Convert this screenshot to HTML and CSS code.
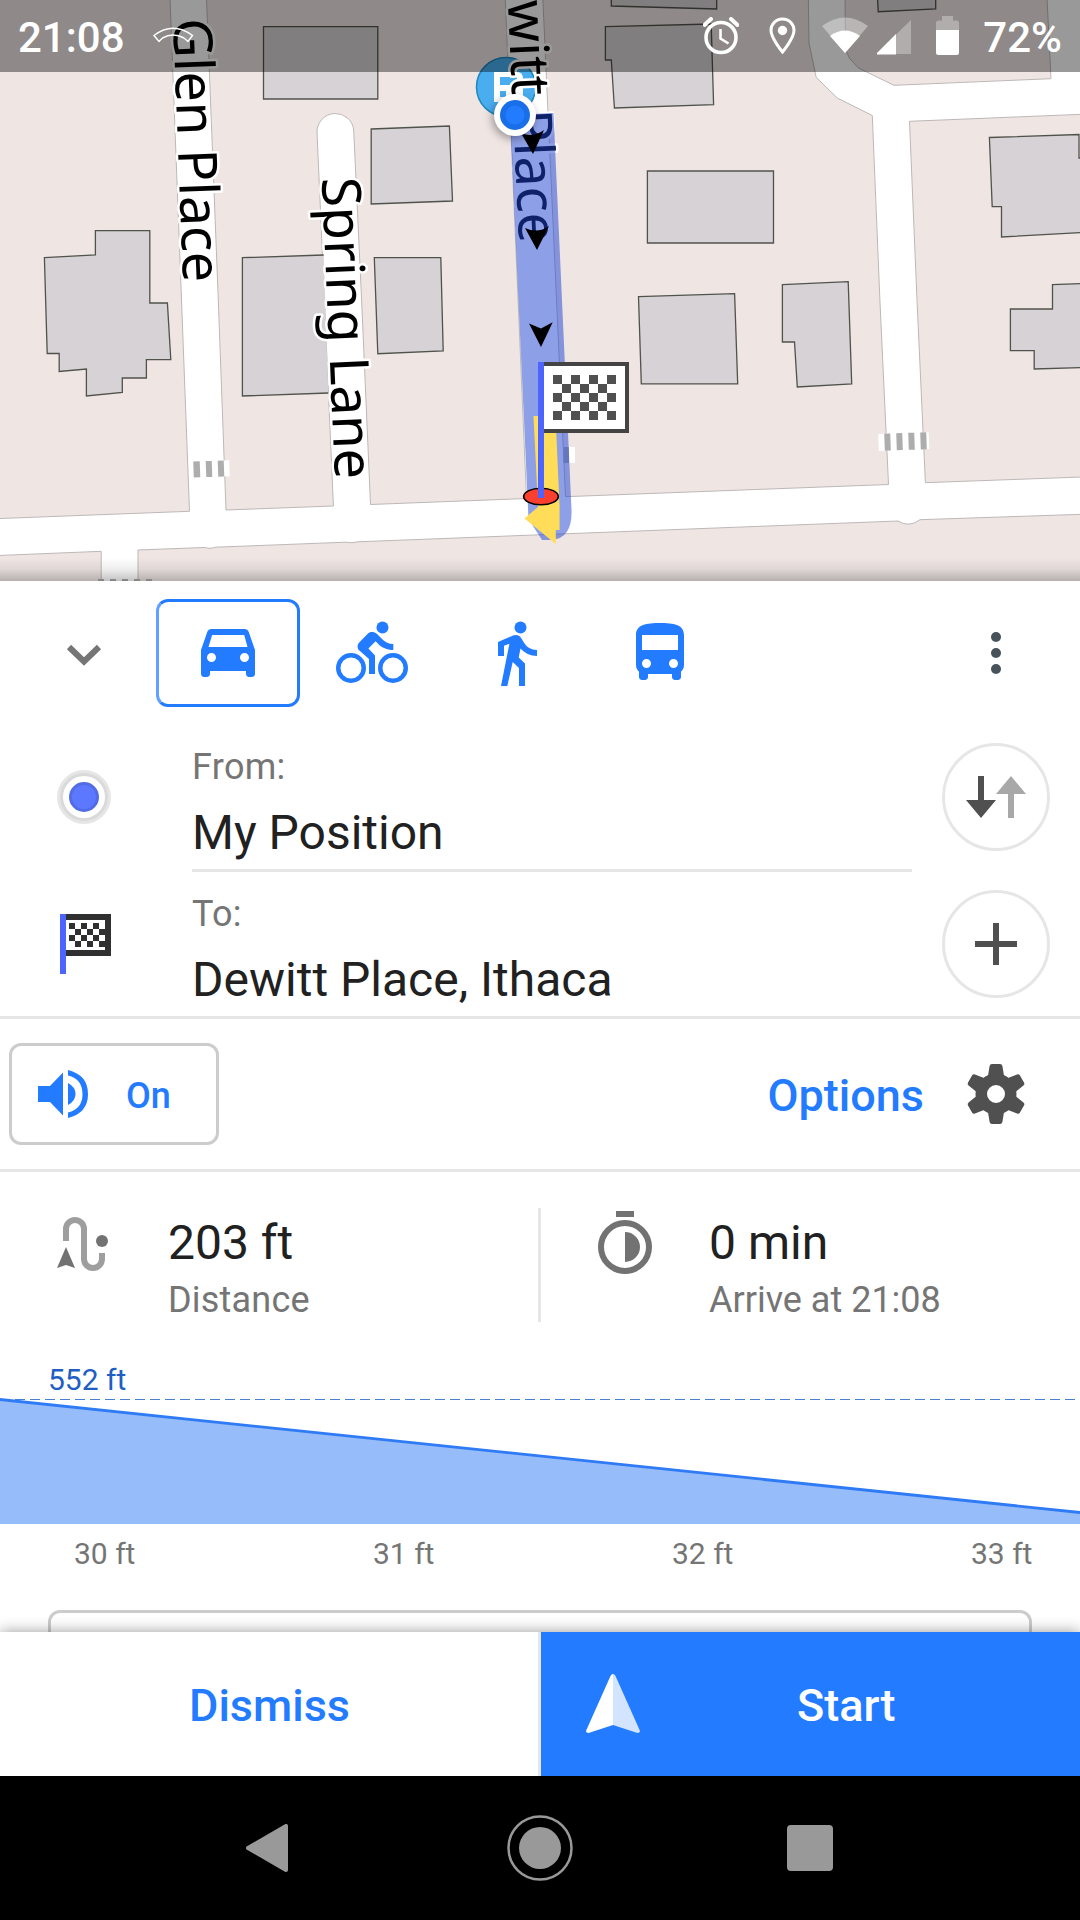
FILE: index.html
```html
<!DOCTYPE html>
<html lang="en">
<head>
<meta charset="utf-8">
<title>Route details</title>
<link rel="stylesheet" href="styles.css">
</head>
<body>
<main class="screen">
  <section class="map">
    <svg class="map-canvas" viewBox="0 0 1080 581" width="1080" height="581">
      <defs>
        <linearGradient id="shade" x1="0" y1="0" x2="0" y2="1">
          <stop offset="0" stop-color="#000" stop-opacity="0"/>
          <stop offset=".5" stop-color="#000" stop-opacity=".07"/>
          <stop offset="1" stop-color="#000" stop-opacity=".24"/>
        </linearGradient>
        <filter id="soft" x="-50%" y="-50%" width="200%" height="200%"><feGaussianBlur stdDeviation="4"/></filter>
      </defs>
      <rect class="road" width="1080" height="581"/>
      <!-- city blocks between the roads -->
      <g class="block">
        <path d="M-2-2H170L181.500 300L189.500 511.300L-2 518.600z"/>
        <path d="M206.500-2L218.300 300L226 510L333.400 506L324.400 300L317 132A18.400 18.400 0 0 1 353.700 130L361.600 300L370.500 504.500L526.500 498.500L505.200-2z"/>
        <path d="M542.800-2L565.500 496.700L888.500 484.500L879.900 300L872.300 115.500L837.200 98L816.200 77.300L809 43L808.300-2z"/>
        <path d="M845.100-2L845.500 50L850 59L858.500 68L894 85.300L1051 78.700L1047-2z"/>
        <path d="M909.500 121.300L1082 114.300V477L925.400 482.700L917 300z"/>
        <path d="M-2 555.500L101.200 551.300V584H-2z"/>
        <path d="M138 584V550L204 547.500Q210 549.500 216 547.200L346 542.200Q352 543.500 358 541.800L898 521Q909 528 920 519.700L1082 514.300V584z"/>
      </g>
      <g class="building">
        <path d="M263.500 26.700H377.800V99H263.500z"/>
        <path d="M371.200 129L449.400 126L452.500 201L371.200 204z"/>
        <path d="M44.400 257.700L95.400 255V230.700H149.800V303H167.400L170.800 359.700H146.400V378H122.300V392.500L86.400 396V369L59.200 371.500V353.500H47.200z"/>
        <path d="M323.700 255L242.400 257.700V396L328.200 393" />
        <path d="M374.300 257.700H440.800L443.200 351L377.800 353.700z"/>
        <path d="M611.300-3V6L716.700 9V-3z"/>
        <path d="M605.400 26.700L711.200 24L713.600 104.700L614.400 108L611.300 60H605.400z"/>
        <path d="M877.500-3L878.200 11.700L935.700 9V-3z"/>
        <path d="M647.400 171H773.500V243H647.400z"/>
        <path d="M638.500 296.700L734.600 293.700L737.700 383.800H641.300z"/>
        <path d="M782.400 284.700L848.200 281.700L851.700 384L797.300 387L794.500 342H782.400z"/>
        <path d="M989.400 137.500L1079 134.500V158H1084V232.500L1001.500 237V206.700H992.200z"/>
        <path d="M1084 283.500L1052.500 284.700V309H1010.400V350.700H1034.200V369L1084 367.500z"/>
      </g>
      <g class="crossing">
        <g transform="rotate(-2 209 469)"><rect class="paint" x="189" y="461" width="40.500" height="16"/><path d="M193.500 461h6.500v16h-6.500zM206 461h6v16h-6zM218 461h6v16h-6z"/></g>
        <g transform="rotate(-2 904 441)"><rect class="paint" x="878.500" y="433" width="50.500" height="17"/><path d="M884.500 433h6v17h-6zM896.500 433h6v17h-6zM908.500 433h6v17h-6zM920.500 433h6v17h-6z"/></g>
        <rect class="paint" x="569" y="447" width="6" height="16"/><rect x="563.500" y="447" width="5.500" height="16"/>
        <path d="M98 579h6v3h-6zM110 579h6v3h-6zM122 579h6v3h-6zM134 579h6v3h-6zM146 579h6v3h-6z"/>
      </g>
      <!-- bus stop -->
      <circle cx="506" cy="87" r="29.500" fill="#49adef" stroke="#1e88bd" stroke-width="1.500"/>
      <path d="M494 72h23q6 0 6 7v23h-29zM500 77h17v8h-17zM500 91h6v6h-6z" fill="#fff" fill-rule="evenodd"/>
      <g class="street">
        <text transform="translate(173 19) rotate(87.800)" textLength="264">Glen Place</text>
        <text transform="translate(321.800 178) rotate(87.500)" textLength="302">Spring Lane</text>
        <text transform="translate(504.500 -68) rotate(87.300)" textLength="312">Dewitt Place</text>
      </g>
      <path class="route" d="M510 115L553.500 113L571.500 510Q572.500 538 552 540H542L528.500 519z"/>
      <g>
        <path d="M521 133Q533 138 544 130L533 154z"/>
        <path d="M525 228Q538 234 549 226L537 250z"/>
        <path d="M529 323.500L541 328.500L552.700 322.300L541 347z"/>
      </g>
      <path d="M533.500 416H555.500L559.600 507V530H555.800V544L524.500 518.500L538 507z" fill="#ffdd59"/>
      <ellipse cx="541" cy="496.500" rx="17.300" ry="8.300" fill="#fb4030" stroke="#000" stroke-width="1.600"/>
      <path d="M542 364H627V431H542z" fill="#fff" stroke="#444" stroke-width="4"/>
      <path d="M538 362h6v136h-6z" fill="#4d64ff"/>
      <path d="M553 375h9v9h-9zM571 375h9v9h-9zM589 375h9v9h-9zM607 375h9v9h-9zM562 384h9v9h-9zM580 384h9v9h-9zM598 384h9v9h-9zM553 393h9v9h-9zM571 393h9v9h-9zM589 393h9v9h-9zM607 393h9v9h-9zM562 402h9v9h-9zM580 402h9v9h-9zM598 402h9v9h-9zM553 411h9v9h-9zM571 411h9v9h-9zM589 411h9v9h-9zM607 411h9v9h-9z" fill="#505050"/>
      <circle cx="513" cy="118" r="21" opacity=".35" filter="url(#soft)"/>
      <circle cx="515" cy="115" r="21" fill="#fff"/>
      <circle cx="515" cy="115" r="15" fill="#196fe8"/>
      <circle cx="515" cy="115" r="9.500" fill="#237bff"/>
      <rect y="558" width="1080" height="23" fill="url(#shade)"/>
    </svg>
    <header class="status">
      <span class="clock">21:08</span>
      <svg class="missed" width="41" height="17" viewBox="0 0 41 17"><path d="M1 8.500Q20-6 39.500 8.500L35 14.500L31 11Q20 5 9.500 11L6 14.500z" fill="none" stroke="#fff" stroke-width="1.500"/></svg>
      <div class="tray">
        <svg width="36" height="38" viewBox="0 0 36 38"><circle cx="18" cy="20.500" r="15" fill="none" stroke="#fff" stroke-width="3.600"/><path d="M17.500 12v9.500l8 5" fill="none" stroke="#fff" stroke-width="2.600"/><path d="M1.500 8L8 2M34.500 8L28 2" stroke="#fff" stroke-width="4" stroke-linecap="round"/></svg>
        <svg class="pin" width="27" height="38" viewBox="0 0 27 38"><path d="M13.500 2C6.500 2 2 7.500 2 13.500C2 21 13.500 35 13.500 35S25 21 25 13.500C25 7.500 20.500 2 13.500 2z" fill="none" stroke="#fff" stroke-width="3"/><circle cx="13.500" cy="13.500" r="4.700" fill="#fff"/></svg>
        <svg class="wifi" width="46" height="38" viewBox="0 0 46 38"><path d="M0 9Q23-8 46 9L23 36z" fill="#fff" opacity=".37"/><path d="M8 19Q23 8 38 19L23 36z" fill="#fff"/></svg>
        <svg class="signal" width="34" height="38" viewBox="0 0 34 38"><path d="M19 17.500L34 3v34H19z" fill="#fff" opacity=".3"/><path d="M19 17L0 36v1.500h19z" fill="#fff"/></svg>
        <svg class="battery" width="23" height="39" viewBox="0 0 23 39"><path d="M0 14V7q0-2.500 2.500-2.500H6V0h11v4.500h3.500Q23 4.500 23 7v7z" fill="#fff" opacity=".3"/><path d="M0 14h23v22.500q0 2.500-2.500 2.500h-18Q0 39 0 36.500z" fill="#fff"/></svg>
        <span class="clock">72%</span>
      </div>
    </header>
  </section>

  <section class="panel">
    <nav class="modes">
      <span class="collapse"><svg width="36" height="24" viewBox="0 0 36 24"><path d="M3 4L18 18.500L33 4" fill="none" stroke="#757575" stroke-width="6"/></svg></span>
      <span class="mode active"><svg class="icon" viewBox="0 0 24 24"><path fill-rule="evenodd" d="M18.920 5.010C18.720 4.420 18.160 4 17.500 4h-11c-.66 0-1.210.42-1.420 1.010L3 11v8c0 .55.45 1 1 1h1c.55 0 1-.45 1-1v-1h12v1c0 .55.45 1 1 1h1c.55 0 1-.45 1-1v-8zM6.700 6h10.700l1.100 4h-13zM6.500 12a1.500 1.500 0 1 0 0 3a1.500 1.500 0 0 0 0-3zM17.500 12a1.500 1.500 0 1 0 0 3a1.500 1.500 0 0 0 0-3z"/></svg></span>
      <span class="mode"><svg class="icon" viewBox="0 0 24 24"><circle cx="15.500" cy="3.500" r="2"/><g fill="none" stroke="#237bff" stroke-width="1.500"><circle cx="5" cy="17" r="4.250"/><circle cx="19" cy="17" r="4.250"/></g><path d="M10.800 10.500l2.400-2.400.8.8c1.300 1.300 3 2.100 5.100 2.100V9c-1.500 0-2.700-.6-3.600-1.500l-1.900-1.900c-.5-.4-1-.6-1.600-.6s-1.100.2-1.400.6L7.800 8.400c-.4.4-.6.9-.6 1.400 0 .6.200 1.100.6 1.400L11 14v5h2v-6.200z"/></svg></span>
      <span class="mode"><svg class="icon" viewBox="0 0 24 24"><circle cx="13.500" cy="3.500" r="2"/><path d="M9.800 8.900L7 23h2.100l1.800-8 2.100 2v6h2v-7.500l-2.100-2 .6-3C14.800 12 16.800 13 19 13v-2c-1.900 0-3.500-1-4.300-2.400l-1-1.600c-.4-.6-1-1-1.700-1-.3 0-.5.1-.8.1L6 8.300V13h2V9.600z"/></svg></span>
      <span class="mode"><svg class="icon" viewBox="0 0 24 24"><path fill-rule="evenodd" d="M4 16c0 .88.39 1.670 1 2.220V20c0 .55.45 1 1 1h1c.55 0 1-.45 1-1v-1h8v1c0 .55.45 1 1 1h1c.55 0 1-.45 1-1v-1.780c.61-.55 1-1.340 1-2.220V6c0-3.500-3.580-4-8-4s-8 .5-8 4zM6 6h12v5H6zM7.500 14a1.500 1.500 0 1 0 0 3a1.500 1.500 0 0 0 0-3zM16.500 14a1.500 1.500 0 1 0 0 3a1.500 1.500 0 0 0 0-3z"/></svg></span>
      <span class="more"><svg width="12" height="44" viewBox="0 0 12 44"><g fill="#47525a"><circle cx="6" cy="6" r="5"/><circle cx="6" cy="22" r="5"/><circle cx="6" cy="38" r="5"/></g></svg></span>
    </nav>

    <div class="point from">
      <span class="side"><svg width="54" height="54" viewBox="0 0 54 54"><circle cx="27" cy="27" r="27" fill="#e6e6e6"/><circle cx="27" cy="27" r="24" fill="#dadada"/><circle cx="27" cy="27" r="21" fill="#fff"/><circle cx="27" cy="27" r="13.500" fill="#5b78ff" stroke="#526ce6" stroke-width="3"/></svg></span>
      <div class="field"><span class="label">From:</span><span class="value">My Position</span></div>
      <span class="side"><span class="round"><svg width="60" height="42" viewBox="0 0 60 42"><path d="M12 0h6v24h12L15 42L0 24h12z" fill="#505050"/><path d="M42 42h6V18h12L45 0L30 18h12z" fill="#a8a8a8"/></svg></span></span>
    </div>
    <div class="point to">
      <span class="side"><svg class="flag" width="51" height="60" viewBox="0 0 51 60"><path d="M6 0h45v42H6z" fill="#303030"/><path d="M6 6h39v30H6z" fill="#fff"/><path d="M0 0h6v60H0z" fill="#4d64ff"/><path d="M9 9h6v6H9zM21 9h6v6h-6zM33 9h6v6h-6zM15 15h6v6h-6zM27 15h6v6h-6zM39 15h6v6h-6zM9 21h6v6H9zM21 21h6v6h-6zM33 21h6v6h-6zM15 27h6v6h-6zM27 27h6v6h-6zM39 27h6v6h-6z" fill="#303030"/></svg></span>
      <div class="field"><span class="label">To:</span><span class="value">Dewitt Place, Ithaca</span></div>
      <span class="side"><span class="round"><svg width="42" height="42" viewBox="0 0 42 42"><path d="M18 0h6v18h18v6H24v18h-6V24H0v-6h18z" fill="#505050"/></svg></span></span>
    </div>

    <div class="settings">
      <span class="voice">
        <svg width="50" height="48" viewBox="0 0 50 48"><g fill="#237bff"><path d="M0 16h12L25 2.500v43L12 32H0z"/><path d="M30 13Q37.500 17 37.500 24T30 35z"/><path d="M30 0Q50 5 50 24T30 48V42.500Q44.500 39 44.500 24T30 5.500z"/></g></svg>
        <span class="voice-state">On</span>
      </span>
      <span class="options">Options</span>
      <span class="gear"><svg width="60" height="60" viewBox="-30 -30 60 60"><defs><path id="tooth" d="M-8.500-15L-6.400-28Q-6-30-4-30H4Q6-30 6.400-28L8.500-15z"/></defs><g fill="#505050"><path fill-rule="evenodd" d="M0-20.500A20.500 20.500 0 1 0 0 20.500A20.500 20.500 0 0 0 0-20.500zM0-9A9 9 0 1 1 0 9A9 9 0 0 1 0-9z"/><use href="#tooth"/><use href="#tooth" transform="rotate(60)"/><use href="#tooth" transform="rotate(120)"/><use href="#tooth" transform="rotate(180)"/><use href="#tooth" transform="rotate(240)"/><use href="#tooth" transform="rotate(300)"/></g></svg></span>
    </div>

    <div class="stats">
      <div class="stat">
        <svg class="stat-icon way" width="51" height="54" viewBox="0 0 51 54"><path d="M9 24V12a9 9 0 0 1 18 0V42a9 9 0 0 0 18 0V36" fill="none" stroke="#9e9e9e" stroke-width="6"/><path d="M9 30L18 51L9 48L0 51z" fill="#727272"/><circle cx="45" cy="24" r="6" fill="#727272"/></svg>
        <div><div class="big">203 ft</div><div class="small wide">Distance</div></div>
      </div>
      <div class="stat second">
        <svg class="stat-icon watch" width="54" height="63" viewBox="0 0 54 63"><circle cx="27" cy="36" r="24" fill="none" stroke="#727272" stroke-width="6"/><path d="M18 0h18v6H18zM27 21a15 15 0 0 1 0 30z" fill="#727272"/></svg>
        <div><div class="big">0 min</div><div class="small">Arrive at 21:08</div></div>
      </div>
    </div>

    <div class="elevation">
      <div class="peak">552 ft</div>
      <svg width="1080" height="127" viewBox="0 0 1080 127"><path d="M0 2.500L1080 115.500V127H0z" fill="#97bcfa"/><path d="M0 2.500H1080" stroke="#4a80d0" stroke-width="1" stroke-dasharray="10 5"/><path d="M-2 2.300L1082 115.700" stroke="#2f7bf6" stroke-width="2.800"/></svg>
      <div class="axis"><span>30 ft</span><span>31 ft</span><span>32 ft</span><span>33 ft</span></div>
    </div>
    <div class="card"></div>
  </section>

  <footer class="actions">
    <span class="dismiss">Dismiss</span>
    <span class="start">
      <svg width="54" height="60" viewBox="0 0 54 60"><path d="M27 0Q25.500 0 24.500 2L.4 56Q-.6 59 2.500 59L27 51z" fill="#fff"/><path d="M27 0Q28.500 0 29.500 2L53.600 56Q54.600 59 51.500 59L27 51z" fill="#d3e4ff"/></svg>
      <span class="start-label">Start</span>
    </span>
  </footer>
  <nav class="system">
    <svg width="42" height="48" viewBox="0 0 42 48"><path d="M2 24L40 2V46z" fill="#999" stroke="#999" stroke-width="4" stroke-linejoin="round"/></svg>
    <svg width="66" height="66" viewBox="0 0 66 66"><circle cx="33" cy="33" r="31.500" fill="none" stroke="#999" stroke-width="2.500"/><circle cx="33" cy="33" r="21" fill="#999"/></svg>
    <svg width="46" height="46" viewBox="0 0 46 46"><rect width="46" height="46" rx="4" fill="#999"/></svg>
  </nav>
</main>
</body>
</html>
```

FILE: styles.css
```css
* { box-sizing: border-box; }
body { margin: 0; font-family: Roboto, "Liberation Sans", sans-serif; }
svg { display: block; flex: none; }

.screen {
  width: 1080px;
  height: 1920px;
  display: flex;
  flex-direction: column;
  background: #fff;
  overflow: hidden;
}

/* Map */
.map { position: relative; height: 581px; flex: none; }
.road { fill: #fff; }
.block { fill: #efe6e4; stroke: #bdb8b7; stroke-width: 1; }
.building { fill: #d7d2d6; stroke: #50524c; stroke-width: 1.3; }
.crossing { fill: #adadad; }
.paint { fill: #fff; }
.street {
  font: 54px "Noto Sans", sans-serif;
  fill: #000;
  stroke: #fff;
  stroke-width: 5px;
  stroke-linejoin: round;
  paint-order: stroke;
}
.route { fill: rgba(30, 66, 207, .505); }

.status {
  position: absolute;
  inset: 0 0 auto;
  height: 72px;
  display: flex;
  align-items: flex-start;
  padding-left: 18px;
  background: rgba(0, 0, 0, .4);
  color: #fff;
}
.clock { font-size: 42px; font-weight: 500; line-height: 50px; margin-top: 13px; }
.missed { margin: 27px 0 0 28px; }
.tray { display: flex; align-items: flex-start; margin-left: auto; padding: 17px 18px 0 0; }
.tray .clock { margin: -4px 0 0 24px; }
.pin { margin-left: 30px; }
.wifi { margin-left: 26px; }
.signal { margin-left: 9px; }
.battery { margin: -1px 0 0 25px; }

/* Route panel */
.panel { height: 1051px; flex: none; overflow: hidden; color: #212121; }
.modes { height: 144px; display: flex; align-items: center; }
.collapse { width: 156px; padding: 4px 0 0 66px; }
.mode {
  width: 144px;
  height: 108px;
  display: flex;
  align-items: center;
  justify-content: center;
}
.active { border: 3px solid #237bff; border-left-color: #62a1ff; border-radius: 12px; }
.icon { width: 72px; height: 72px; fill: #237bff; }
.more { width: 168px; margin-left: auto; display: flex; justify-content: center; }

.point { display: grid; grid-template-columns: 168px 1fr 168px; height: 147px; }
.side { height: 144px; display: flex; align-items: center; justify-content: center; }
.field { display: flex; flex-direction: column; margin-left: 24px; padding-top: 21px; border-bottom: 3px solid #e6e6e6; }
.to { border-bottom: 3px solid #e6e6e6; }
.to .field { border: 0; }
.label { font-size: 36px; line-height: 42px; letter-spacing: .3px; color: #757575; }
.value { font-size: 48px; line-height: 56px; margin-top: 17px; }
.flag { margin-left: 3px; }
.round {
  width: 108px;
  height: 108px;
  display: flex;
  align-items: center;
  justify-content: center;
  border: 3px solid #e6e6e6;
  border-radius: 50%;
}

.settings { height: 153px; display: flex; align-items: center; padding: 0 0 1px 9px; border-bottom: 3px solid #e6e6e6; }
.voice {
  width: 210px;
  height: 102px;
  display: flex;
  align-items: center;
  gap: 38px;
  padding-left: 26px;
  border: 3px solid #ccc;
  border-radius: 12px;
  color: #237bff;
  font-size: 36px;
  font-weight: 500;
}
.voice-state { padding-top: 4px; }
.options { margin-left: auto; padding-top: 3px; color: #237bff; font-size: 45px; font-weight: 500; }
.gear { width: 156px; padding-left: 42px; }

.stats { display: grid; grid-template-columns: 541px 1fr; height: 150px; padding-top: 36px; }
.stat { display: flex; height: 114px; padding-left: 57px; border-right: 3px solid #e6e6e6; }
.second { border: 0; }
.stat-icon { margin: 9px 60px 0 0; }
.watch { margin-top: 3px; margin-right: 57px; }
.big { font-size: 48px; line-height: 56px; margin-top: 7px; }
.small { font-size: 36px; line-height: 42px; margin-top: 8px; color: #757575; }
.wide { letter-spacing: .2px; }

.elevation { height: 288px; padding-top: 40px; font-size: 30px; line-height: 36px; }
.peak { padding: 0 0 0 48px; margin-bottom: -1px; color: #1f5fc4; }
.axis { display: flex; padding: 12px 0 0 74px; color: #757575; }
.axis span { width: 299px; flex: none; }
.card { height: 60px; margin: 0 48px; border: 3px solid #ccc; border-radius: 12px; }

/* Bottom bars */
.actions {
  position: relative;
  height: 144px;
  flex: none;
  display: flex;
  background: #fff;
  box-shadow: 0 0 14px rgba(0, 0, 0, .4);
  font-size: 45px;
  font-weight: 500;
  line-height: 148px;
}
.dismiss { width: 541px; padding-left: 1px; border-right: 3px solid #e6e6e6; text-align: center; color: #237bff; }
.start { flex: 1; display: flex; align-items: center; padding-left: 45px; background: #237bff; color: #fff; }
.start-label { flex: 1; padding: 4px 0 0 157px; }
.system {
  position: relative;
  height: 144px;
  flex: none;
  display: grid;
  grid-template-columns: 261px 66px 260px;
  align-items: center;
  padding-left: 246px;
  background: #000;
}
.system svg:last-child { justify-self: end; }
```
